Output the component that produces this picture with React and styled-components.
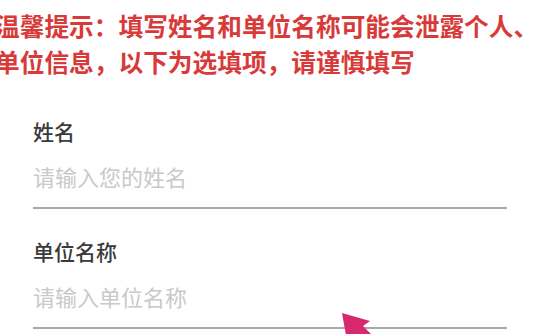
import styled, { createGlobalStyle } from 'styled-components';

const GlobalStyle = createGlobalStyle`
  html, body {
    margin: 0;
    padding: 0;
    background: #ffffff;
    overflow: hidden;
  }
  body {
    font-family: "Noto Sans CJK SC", "Noto Sans", sans-serif;
  }
`;

const Page = styled.div`
  position: relative;
  width: 550px;
  height: 334px;
  overflow: hidden;
  background: #ffffff;
`;

const Notice = styled.p`
  margin: 7px 0 0 -5px;
  font-size: 24.7px;
  line-height: 36px;
  font-weight: 700;
  color: #d83a3a;
  white-space: nowrap;
`;

const Form = styled.div`
  display: flex;
  flex-direction: column;
  gap: 27px;
  width: 474px;
  margin: 37px 0 0 33px;
`;

const Field = styled.label`
  display: flex;
  flex-direction: column;
  gap: 10px;
`;

const Label = styled.span`
  font-size: 21px;
  line-height: 30px;
  font-weight: 500;
  color: #3a3a3a;
`;

const Input = styled.input`
  height: 40px;
  padding: 0 0 11px 0;
  border: none;
  border-bottom: 2px solid #a9a9a9;
  outline: none;
  background: transparent;
  font-family: "Noto Sans CJK SC", "Noto Sans", sans-serif;
  font-size: 22px;
  line-height: 40px;
  color: #333;
  box-sizing: content-box;

  &::placeholder {
    color: #c9c9c9;
  }
`;

const Pointer = styled.svg`
  position: absolute;
  left: 335px;
  top: 305px;
  width: 80px;
  height: 29px;
`;

export default function App() {
  return (
    <Page>
      <GlobalStyle />
      <Notice>
        温馨提示：填写姓名和单位名称可能会泄露个人、
        <br />
        单位信息，以下为选填项，请谨慎填写
      </Notice>
      <Form>
        <Field>
          <Label>姓名</Label>
          <Input placeholder="请输入您的姓名" />
        </Field>
        <Field>
          <Label>单位名称</Label>
          <Input placeholder="请输入单位名称" />
        </Field>
      </Form>
      <Pointer viewBox="0 0 80 29">
        <polygon
          points="7,8 35,16 28,21 68,61 60,69 20,29 12,36"
          fill="#d8286f"
        />
      </Pointer>
    </Page>
  );
}
